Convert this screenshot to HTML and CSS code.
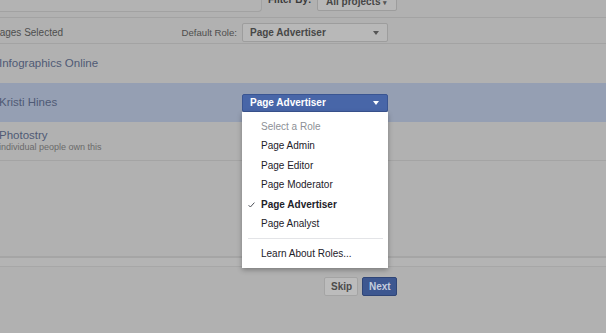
FILE: index.html
```html
<!DOCTYPE html>
<html lang="en">
<head>
    <meta charset="UTF-8">
    <meta name="viewport" content="width=device-width, initial-scale=1.0">
    <title>Assign Page Roles</title>

    <!-- Style CSS -->
    <link rel="stylesheet" href="styles.css">
</head>
<body>
    <div class="dialog">
        <div class="toolbar">
            <div class="search"></div>
            <span class="filter-label">Filter By:</span>
            <button class="btn btn-filter">All projects <span class="mini-caret">&#9662;</span></button>
        </div>

        <div class="selectbar">
            <span class="count">Pages Selected</span>
            <span class="default-role">Default Role:</span>
            <div class="select">
                <span>Page Advertiser</span>
                <i class="caret"></i>
            </div>
        </div>

        <ul class="pages">
            <li class="page">
                <span class="page-name">Infographics Online</span>
            </li>
            <li class="page active">
                <span class="page-name">Kristi Hines</span>
                <div class="role">
                    <div class="select select-open">
                        <span>Page Advertiser</span>
                        <i class="caret"></i>
                    </div>
                    <ul class="menu">
                        <li class="menu-item placeholder">Select a Role</li>
                        <li class="menu-item">Page Admin</li>
                        <li class="menu-item">Page Editor</li>
                        <li class="menu-item">Page Moderator</li>
                        <li class="menu-item checked">
                            <svg class="check" width="7" height="6" viewBox="0 0 7 6">
                                <path d="M0.6 3.2 L2.4 5 L6.4 0.6" fill="none" stroke="#4b4f56" stroke-width="1"/>
                            </svg>
                            Page Advertiser
                        </li>
                        <li class="menu-item">Page Analyst</li>
                        <li class="menu-sep"></li>
                        <li class="menu-item">Learn About Roles...</li>
                    </ul>
                </div>
            </li>
            <li class="page page-last">
                <div>
                    <div class="page-name">Photostry</div>
                    <div class="page-sub">individual people own this</div>
                </div>
            </li>
        </ul>

        <div class="spacer"></div>
        <div class="footer-edge"></div>

        <div class="footer">
            <button class="btn btn-skip">Skip</button>
            <button class="btn btn-next">Next</button>
        </div>
    </div>
</body>
</html>
```

FILE: styles.css
```css
* {
    margin: 0;
    padding: 0;
    box-sizing: border-box;
}

body {
    font-family: 'Liberation Sans', Arial, sans-serif;
    background-color: #b1b1b1;
    overflow: hidden;
}

.dialog {
    width: 610px;
    margin-left: -4px;
}

/* Toolbar atas */
.toolbar {
    display: flex;
    align-items: flex-start;
    height: 18px;
    border-bottom: 1px solid #a3a3a3;
    padding-right: 209px;
}

.search {
    width: 266px;
    height: 12px;
    border-right: 1px solid #a2a2a2;
    border-bottom: 1px solid #a2a2a2;
    border-bottom-right-radius: 4px;
    background-color: #b3b3b3;
}

.filter-label {
    margin-left: 6px;
    margin-top: -6px;
    line-height: 12px;
    font-size: 10px;
    font-weight: bold;
    color: #3a3a3a;
}

.btn {
    font-family: inherit;
    font-weight: bold;
    font-size: 10px;
    border-radius: 2px;
    cursor: pointer;
}

.btn-filter {
    margin-left: auto;
    margin-top: -8px;
    width: 80px;
    height: 19px;
    line-height: 17px;
    padding: 0 8px;
    text-align: left;
    background-color: #b8b8b8;
    border: 1px solid #9d9d9d;
    color: #464646;
}

.mini-caret {
    font-size: 7px;
    color: #555;
}

/* Baris default role */
.selectbar {
    display: flex;
    align-items: center;
    height: 26px;
    padding: 3px 218px 0 3px;
    border-bottom: 1px solid #a3a3a3;
}

.count {
    margin-left: -6px;
    font-size: 10px;
    color: #4e4e4e;
}

.default-role {
    margin-left: auto;
    margin-right: 5px;
    font-size: 9.6px;
    color: #4e4e4e;
}

.select {
    position: relative;
    width: 146px;
    height: 19px;
    padding-left: 7px;
    display: flex;
    align-items: center;
    font-size: 10px;
    font-weight: bold;
    color: #474747;
    background-color: #b8b8b8;
    border: 1px solid #9d9d9d;
    border-radius: 2px;
}

.caret {
    position: absolute;
    right: 8px;
    top: 7px;
    border-left: 3.5px solid transparent;
    border-right: 3.5px solid transparent;
    border-top: 4px solid #555;
}

/* Daftar halaman */
.pages {
    list-style: none;
}

.page {
    display: flex;
    align-items: center;
    justify-content: space-between;
    height: 39px;
    padding: 0 218px 0 3px;
}

.page.active {
    background-color: #959fb3;
}

.page-last {
    height: 39px;
    border-bottom: 1px solid #a4a4a4;
}

.page-name {
    font-size: 11.5px;
    line-height: 13px;
    color: #4f5a75;
}

.page-sub {
    font-size: 9px;
    line-height: 11px;
    color: #6a6a6a;
}

/* Dropdown role */
.role {
    position: relative;
}

.select-open {
    height: 18px;
    background-color: #4866a8;
    border-color: #3a5592;
    color: #fff;
}

.select-open .caret {
    border-top-color: #fff;
    top: 6px;
}

.menu {
    position: absolute;
    top: 100%;
    left: 0;
    width: 146px;
    list-style: none;
    background-color: #fff;
    padding: 5px 0 4px;
    box-shadow: 0 2px 5px rgba(0, 0, 0, 0.3);
    z-index: 2;
}

.menu-item {
    position: relative;
    height: 19.5px;
    line-height: 19.5px;
    padding-left: 19px;
    font-size: 10px;
    color: #1d2129;
}

.menu-item.placeholder {
    color: #8d9096;
}

.menu-item.checked {
    font-weight: bold;
}

.check {
    position: absolute;
    left: 6px;
    top: 7px;
}

.menu-sep {
    height: 1px;
    margin: 4.5px 5px 5px 6px;
    background-color: #e3e4e7;
}

/* Footer */
.spacer {
    height: 95px;
}

.footer-edge {
    height: 11px;
    border-top: 2px solid #a5a5a5;
    border-bottom: 1px solid #a7a7a7;
    background-color: #b4b4b4;
}

.footer {
    display: flex;
    justify-content: flex-end;
    gap: 4px;
    padding: 10px 209px 0 0;
}

.btn-skip,
.btn-next {
    height: 19px;
    padding: 0 6px;
}

.btn-skip {
    width: 34px;
    background-color: #bcbcbc;
    border: 1px solid #a4a4a4;
    color: #4b4b4b;
}

.btn-next {
    width: 35px;
    background-color: #3d5790;
    border: 1px solid #2f4577;
    color: #c5cddd;
}
```
